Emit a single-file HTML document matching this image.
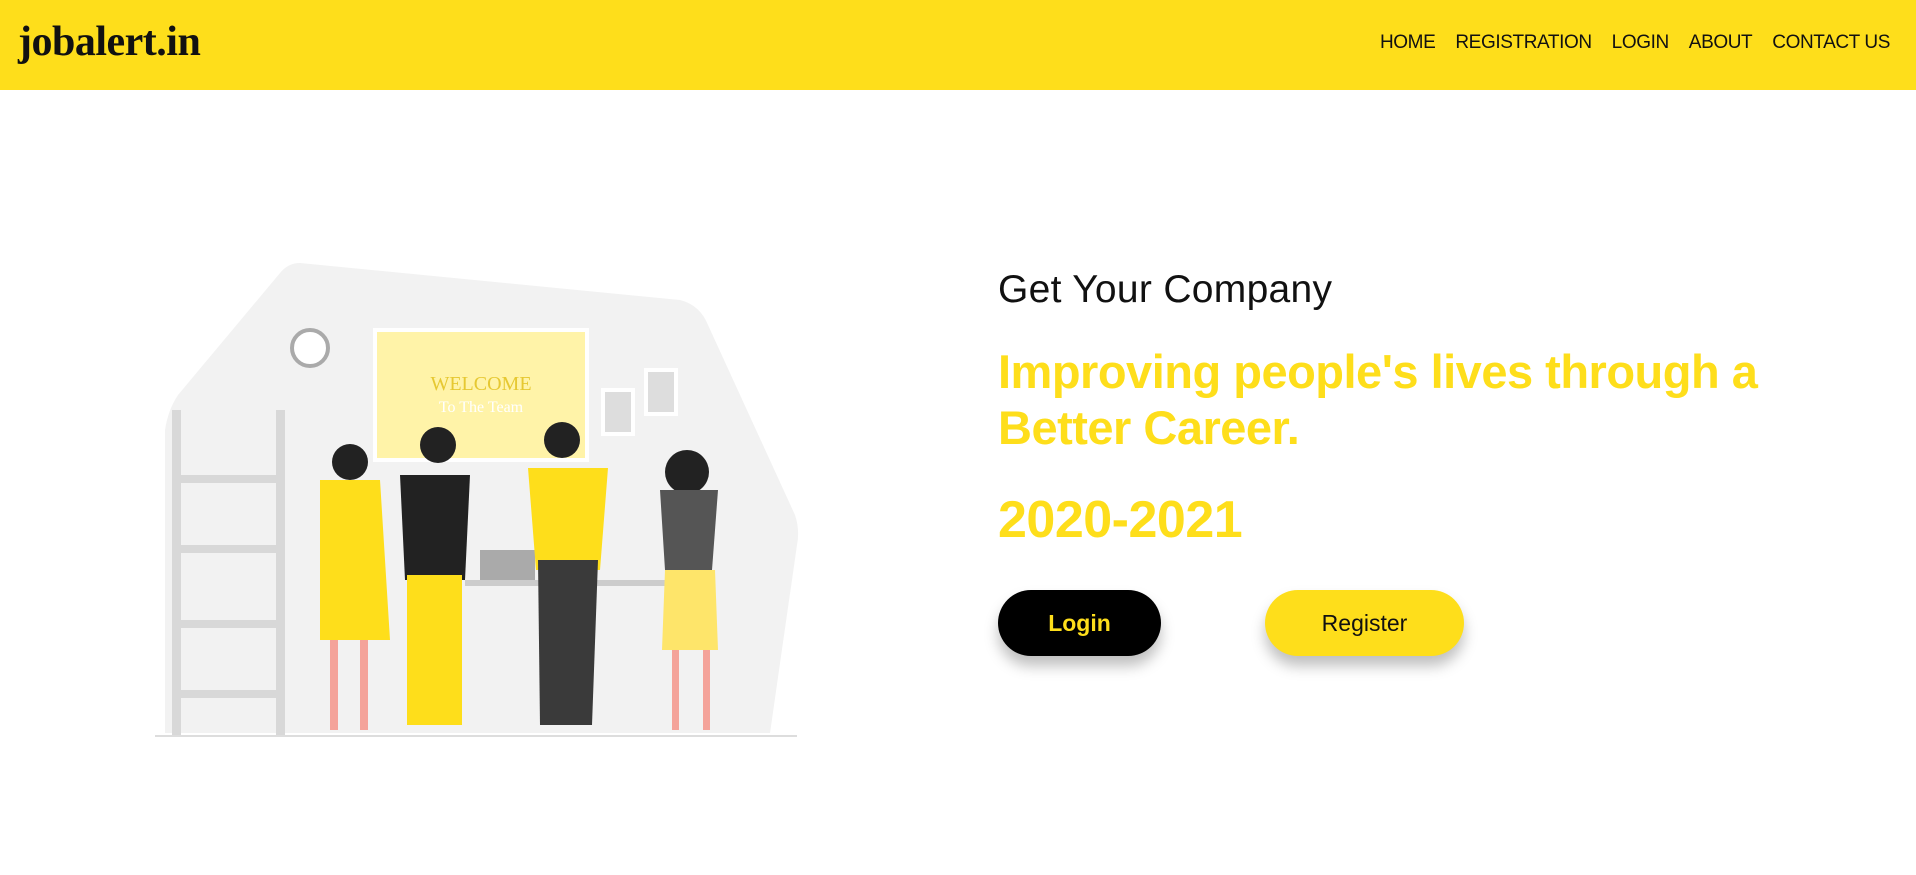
<!DOCTYPE html>
<html><head><meta charset="utf-8"><style>
*{margin:0;padding:0;box-sizing:border-box}
body{width:1916px;height:875px;background:#fff;font-family:"Liberation Sans",sans-serif;position:relative;overflow:hidden}
header{position:absolute;left:0;top:0;width:1916px;height:90px;background:#FEDE1B}
.logo{position:absolute;left:18px;top:18px;font-family:"Liberation Serif",serif;font-weight:bold;font-size:42px;color:#111;letter-spacing:-0.5px}
nav{position:absolute;right:26px;top:32px;font-size:19px;color:#111;display:flex;gap:20px;letter-spacing:-0.4px}
.t{position:absolute;left:998px}
.h1{top:268px;font-size:39px;color:#111;letter-spacing:0.3px}
.h2{top:344px;font-size:47px;font-weight:bold;color:#FEDE1B;line-height:56px;letter-spacing:-0.5px}
.h3{top:490px;font-size:52px;font-weight:bold;color:#FEDE1B;letter-spacing:-0.5px}
.btn{position:absolute;top:590px;height:66px;border-radius:33px;font-size:23px;font-weight:bold;display:flex;align-items:center;justify-content:center;box-shadow:0 10px 14px rgba(0,0,0,.25)}
</style></head><body>
<header><div class="logo">jobalert.in</div>
<nav><span>HOME</span><span>REGISTRATION</span><span>LOGIN</span><span>ABOUT</span><span>CONTACT US</span></nav></header>
<svg style="position:absolute;left:0;top:0" width="1000" height="875">
<path d="M300 263 L680 300 Q700 305 708 325 L795 515 Q800 530 797 545 L770 733 L165 733 L165 430 Q168 410 178 395 L280 273 Q288 263 300 263Z" fill="#f2f2f2"/>
<line x1="155" y1="736" x2="797" y2="736" stroke="#ddd" stroke-width="2"/>
<circle cx="310" cy="348" r="18" fill="#fff" stroke="#aaa" stroke-width="4"/>
<rect x="375" y="330" width="212" height="130" fill="#FFF3A8" stroke="#fff" stroke-width="4"/>
<text x="481" y="390" font-family="Liberation Serif" font-size="20" fill="#E6C832" text-anchor="middle">WELCOME</text>
<text x="481" y="412" font-family="Liberation Serif" font-size="16" fill="#fff" text-anchor="middle">To The Team</text>
<rect x="603" y="390" width="30" height="44" fill="#ddd" stroke="#fff" stroke-width="4"/>
<rect x="646" y="370" width="30" height="44" fill="#ddd" stroke="#fff" stroke-width="4"/>
<g fill="#d8d8d8"><rect x="172" y="410" width="9" height="325"/><rect x="276" y="410" width="9" height="325"/><rect x="172" y="475" width="113" height="8"/><rect x="172" y="545" width="113" height="8"/><rect x="172" y="620" width="113" height="8"/><rect x="172" y="690" width="113" height="8"/></g>
<rect x="465" y="580" width="210" height="6" fill="#ccc"/>
<rect x="480" y="550" width="55" height="30" fill="#aaa"/>
<g><circle cx="350" cy="462" r="18" fill="#222"/><path d="M320 480 L380 480 L390 640 L320 640Z" fill="#FEDE1B"/><rect x="330" y="640" width="8" height="90" fill="#f4a39a"/><rect x="360" y="640" width="8" height="90" fill="#f4a39a"/></g>
<g><circle cx="438" cy="445" r="18" fill="#222"/><path d="M400 475 L470 475 L465 580 L405 580Z" fill="#222"/><rect x="407" y="575" width="55" height="150" fill="#FEDE1B"/></g>
<g><circle cx="562" cy="440" r="18" fill="#222"/><path d="M528 468 L608 468 L600 570 L536 570Z" fill="#FEDE1B"/><path d="M538 560 L598 560 L592 725 L540 725Z" fill="#3a3a3a"/></g>
<g><circle cx="687" cy="472" r="22" fill="#222"/><path d="M660 490 L718 490 L712 570 L665 570Z" fill="#555"/><path d="M665 570 L715 570 L718 650 L662 650Z" fill="#FEE56A"/><rect x="672" y="650" width="7" height="80" fill="#f4a39a"/><rect x="703" y="650" width="7" height="80" fill="#f4a39a"/></g>
</svg>
<div class="t h1">Get Your Company</div>
<div class="t h2">Improving people's lives through a<br>Better Career.</div>
<div class="t h3">2020-2021</div>
<div class="btn" style="left:998px;width:163px;background:#000;color:#FEDE1B">Login</div>
<div class="btn" style="left:1265px;width:199px;background:#FEDE1B;color:#111;font-weight:normal">Register</div>
</body></html>
